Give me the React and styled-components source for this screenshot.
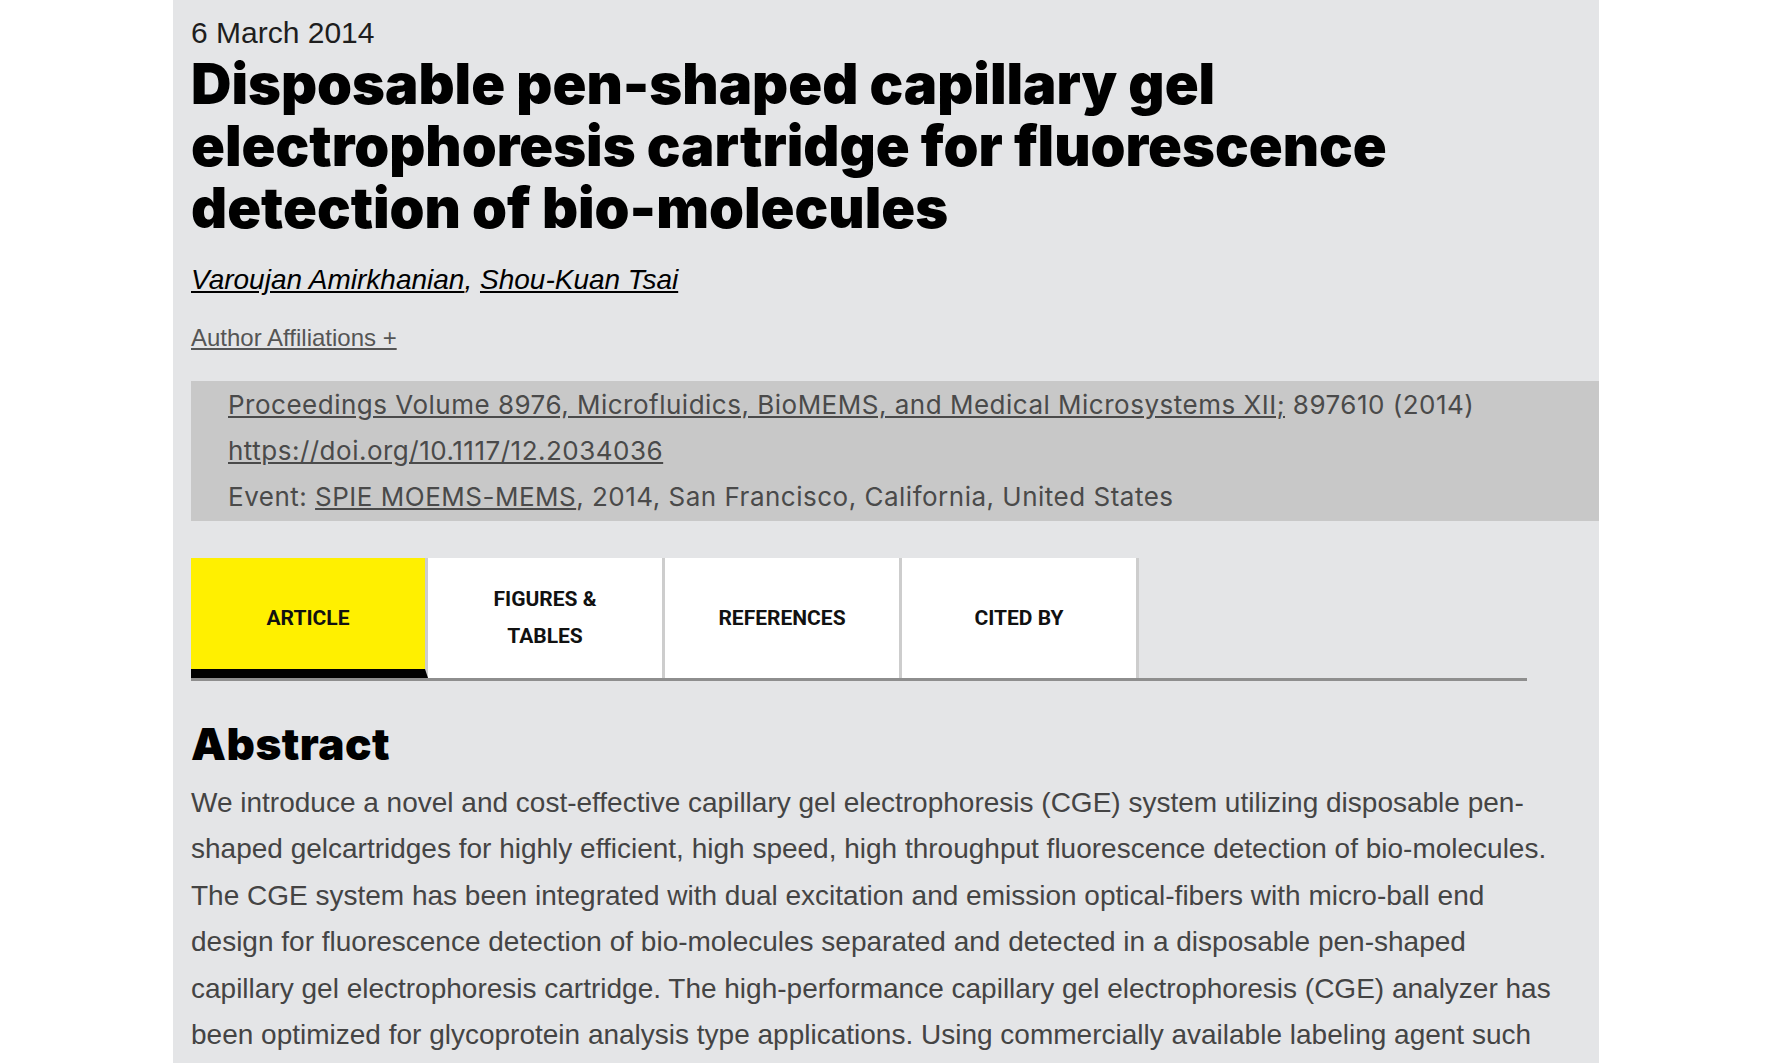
import React from "react";
import styled, { createGlobalStyle } from "styled-components";

const GlobalStyle = createGlobalStyle`
  html, body {
    margin: 0;
    padding: 0;
    background: #ffffff;
    overflow: hidden;
  }
`;

const Page = styled.div`
  width: 1426px;
  margin: 0 auto;
  min-height: 100vh;
  background-color: #e4e5e7;
  padding: 15px 0 0 18px;
  box-sizing: border-box;
`;

const DateLine = styled.div`
  font-family: "Liberation Sans", Arial, sans-serif;
  font-size: 30px;
  line-height: 36px;
  color: #1e1e1e;
`;

const Title = styled.h1`
  margin: 2px 0 0;
  max-width: 1300px;
  font-family: Inter, "Noto Sans", sans-serif;
  font-weight: 900;
  font-size: 56px;
  line-height: 62px;
  letter-spacing: 0;
  color: #000;
`;

const Authors = styled.div`
  margin-top: 23px;
  font-family: "Liberation Sans", Arial, sans-serif;
  font-style: italic;
  font-size: 28px;
  line-height: 36px;
  color: #000;

  a {
    color: inherit;
    text-decoration: underline;
  }
`;

const Affiliations = styled.a`
  display: inline-block;
  margin-top: 25px;
  font-family: "Liberation Sans", Arial, sans-serif;
  font-size: 24px;
  line-height: 30px;
  color: #555;
  text-decoration: underline;
`;

const MetaBox = styled.div`
  margin-top: 28px;
  background-color: #c8c8c8;
  padding: 1px 0 1px 37px;
  font-family: Inter, "Open Sans", sans-serif;
  font-size: 26px;
  line-height: 46px;
  letter-spacing: 0.5px;
  color: #4a4a4a;

  a {
    color: inherit;
    text-decoration: underline;
  }
`;

const TabBar = styled.div`
  display: flex;
  width: 1336px;
  margin-top: 37px;
  border-bottom: 3px solid #8e8e8e;
`;

const Tab = styled.div`
  box-sizing: border-box;
  width: 237px;
  height: 120px;
  display: flex;
  align-items: center;
  justify-content: center;
  text-align: center;
  white-space: pre-line;
  background-color: ${(p) => (p.$active ? "#fff000" : "#ffffff")};
  border-right: 3px solid #cdcdcd;
  border-bottom: ${(p) => (p.$active ? "9px solid #000" : "0")};
  padding-top: ${(p) => (p.$active ? "9px" : "0")};
  font-family: Roboto, "Liberation Sans", sans-serif;
  font-weight: 700;
  font-size: 21px;
  line-height: 37px;
  color: #111;
`;

const Heading = styled.h2`
  margin: 38px 0 0;
  font-family: Inter, "Noto Sans", sans-serif;
  font-weight: 900;
  font-size: 44px;
  line-height: 50px;
  letter-spacing: 0.5px;
  color: #000;
`;

const Body = styled.p`
  margin: 11px 0 0;
  width: 1362px;
  font-family: "Liberation Sans", Arial, sans-serif;
  font-size: 28px;
  line-height: 46.4px;
  color: #444;
`;

const tabs = [
  { label: "ARTICLE", active: true },
  { label: "FIGURES &\nTABLES" },
  { label: "REFERENCES" },
  { label: "CITED BY" },
];

export default function App() {
  return (
    <>
      <GlobalStyle />
      <Page>
        <DateLine>6 March 2014</DateLine>
        <Title>
          Disposable pen-shaped capillary gel electrophoresis cartridge for
          fluorescence detection of bio-molecules
        </Title>
        <Authors>
          <a href="#">Varoujan Amirkhanian</a>, <a href="#">Shou-Kuan Tsai</a>
        </Authors>
        <Affiliations href="#">Author Affiliations +</Affiliations>
        <MetaBox>
          <div>
            <a href="#">
              Proceedings Volume 8976, Microfluidics, BioMEMS, and Medical
              Microsystems XII;
            </a>{" "}
            897610 (2014)
          </div>
          <div>
            <a href="#">https://doi.org/10.1117/12.2034036</a>
          </div>
          <div>
            Event: <a href="#">SPIE MOEMS-MEMS</a>, 2014, San Francisco,
            California, United States
          </div>
        </MetaBox>
        <TabBar>
          {tabs.map((t) => (
            <Tab key={t.label} $active={t.active}>
              {t.label}
            </Tab>
          ))}
        </TabBar>
        <Heading>Abstract</Heading>
        <Body>
          We introduce a novel and cost-effective capillary gel electrophoresis
          (CGE) system utilizing disposable pen-shaped gelcartridges for highly
          efficient, high speed, high throughput fluorescence detection of
          bio-molecules. The CGE system has been integrated with dual excitation
          and emission optical-fibers with micro-ball end design for
          fluorescence detection of bio-molecules separated and detected in a
          disposable pen-shaped capillary gel electrophoresis cartridge. The
          high-performance capillary gel electrophoresis (CGE) analyzer has been
          optimized for glycoprotein analysis type applications. Using
          commercially available labeling agent such as APTS, the analyzer
          separates and detects oligosaccharides with high resolution and
          sensitivity.
        </Body>
      </Page>
    </>
  );
}
